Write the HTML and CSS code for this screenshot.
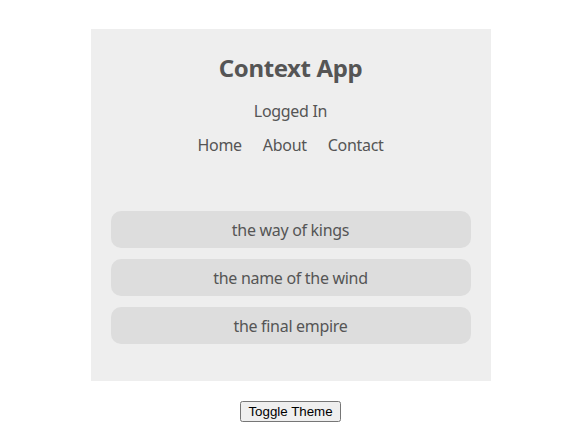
FILE: index.html
```html
<!DOCTYPE html>
<html>
<head>
<meta charset="utf-8">
<link rel="stylesheet" href="styles.css">
</head>
<body>
<div class="app">
  <div class="panel">
    <h1 class="title">Context App</h1>
    <div class="status">Logged In</div>
    <nav class="nav">
      <span>Home</span>
      <span>About</span>
      <span>Contact</span>
    </nav>
    <ul class="books">
      <li class="book">the way of kings</li>
      <li class="book">the name of the wind</li>
      <li class="book">the final empire</li>
    </ul>
  </div>
  <div class="actions">
    <button class="toggle">Toggle Theme</button>
  </div>
</div>
</body>
</html>
```
FILE: styles.css
```css
body {
  margin: 8px;
  font-family: "Noto Sans", sans-serif;
}
.app {
  padding-top: 21px;
}
.panel {
  width: 400px;
  margin: 0 auto;
  background: #eeeeee;
  color: #555555;
  padding: 25px 20px 37px;
  box-sizing: border-box;
  display: flex;
  flex-direction: column;
  align-items: center;
  letter-spacing: -0.3px;
}
.title {
  margin: 0;
  font-size: 24px;
  line-height: 28px;
  font-weight: bold;
  letter-spacing: -0.4px;
}
.status {
  margin-top: 19px;
  font-size: 16px;
  line-height: 20px;
}
.nav {
  margin-top: 14px;
  display: flex;
  gap: 21px;
  font-size: 16px;
  line-height: 20px;
}
.books {
  list-style: none;
  margin: 56px 0 0;
  padding: 0;
  width: 100%;
  display: flex;
  flex-direction: column;
  gap: 11px;
}
.book {
  background: #dddddd;
  border-radius: 10px;
  height: 37px;
  display: flex;
  align-items: center;
  justify-content: center;
  font-size: 16px;
}
.actions {
  display: flex;
  justify-content: center;
  margin-top: 20px;
}
.toggle {
  font-family: "Liberation Sans", Arial, sans-serif;
  font-size: 13.333px;
}
```
